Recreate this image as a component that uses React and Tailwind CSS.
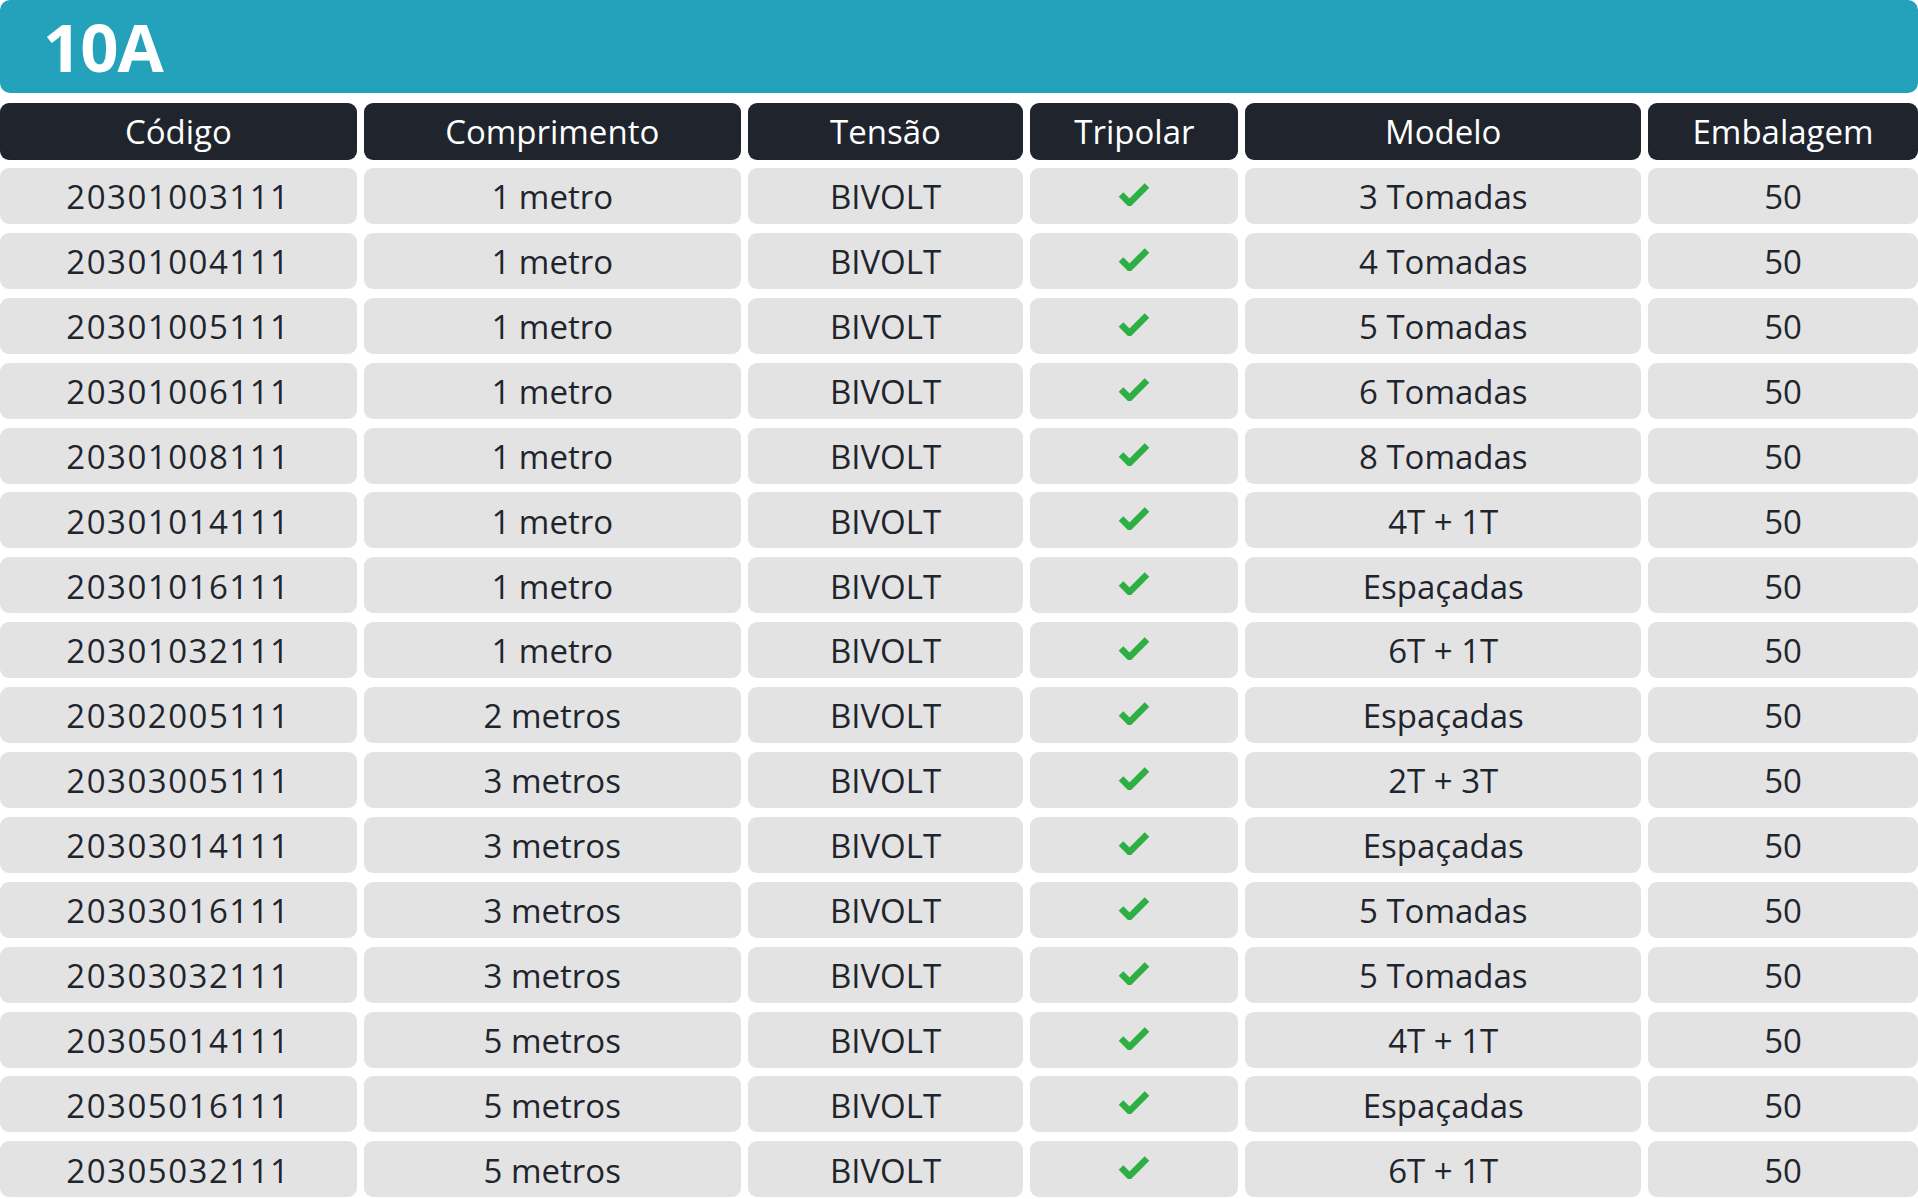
import React from "react";

const rows = [
  ["20301003111", "1 metro", "3 Tomadas"],
  ["20301004111", "1 metro", "4 Tomadas"],
  ["20301005111", "1 metro", "5 Tomadas"],
  ["20301006111", "1 metro", "6 Tomadas"],
  ["20301008111", "1 metro", "8 Tomadas"],
  ["20301014111", "1 metro", "4T + 1T"],
  ["20301016111", "1 metro", "Espaçadas"],
  ["20301032111", "1 metro", "6T + 1T"],
  ["20302005111", "2 metros", "Espaçadas"],
  ["20303005111", "3 metros", "2T + 3T"],
  ["20303014111", "3 metros", "Espaçadas"],
  ["20303016111", "3 metros", "5 Tomadas"],
  ["20303032111", "3 metros", "5 Tomadas"],
  ["20305014111", "5 metros", "4T + 1T"],
  ["20305016111", "5 metros", "Espaçadas"],
  ["20305032111", "5 metros", "6T + 1T"],
];

const headers = ["Código", "Comprimento", "Tensão", "Tripolar", "Modelo", "Embalagem"];

function Check() {
  return (
    <svg width="32" height="24" viewBox="0 0 32 24" className="mt-[-6px]">
      <path d="M3 12.5 L11.5 21 L29 3.5" fill="none" stroke="#2eaf43" strokeWidth="6.5" strokeLinejoin="miter" strokeLinecap="butt" />
    </svg>
  );
}

function Cell({ children, className = "" }) {
  return (
    <div className={"h-[56px] bg-[#e4e3e4] rounded-[9px] flex items-center justify-center text-[#1f252d] text-[33px] pt-[2px] " + className}>
      {children}
    </div>
  );
}

export default function App() {
  return (
    <div className="w-[1918px] h-[1199px] bg-white overflow-hidden" style={{ fontFamily: '"Open Sans", "Noto Sans", sans-serif' }}>
      <div className="h-[93px] bg-[#24a2bc] rounded-[10px] flex items-center pl-[43px]">
        <span className="text-white font-bold text-[67px] leading-none tracking-[-1px]">10A</span>
      </div>
      <div className="mt-[10px] grid grid-cols-[357fr_377fr_276fr_208fr_396fr_270fr] gap-x-[7px]">
        {headers.map((h) => (
          <div key={h} className="h-[57px] bg-[#1f242d] rounded-[9px] flex items-center justify-center text-white text-[33px]">
            {h}
          </div>
        ))}
      </div>
      <div className="mt-[8px] grid grid-cols-[357fr_377fr_276fr_208fr_396fr_270fr] gap-x-[7px] gap-y-[8.9px]">
        {rows.map((r) => (
          <React.Fragment key={r[0]}>
            <Cell className="tracking-[1.5px]">{r[0]}</Cell>
            <Cell>{r[1]}</Cell>
            <Cell>BIVOLT</Cell>
            <Cell><Check /></Cell>
            <Cell>{r[2]}</Cell>
            <Cell>50</Cell>
          </React.Fragment>
        ))}
      </div>
    </div>
  );
}
